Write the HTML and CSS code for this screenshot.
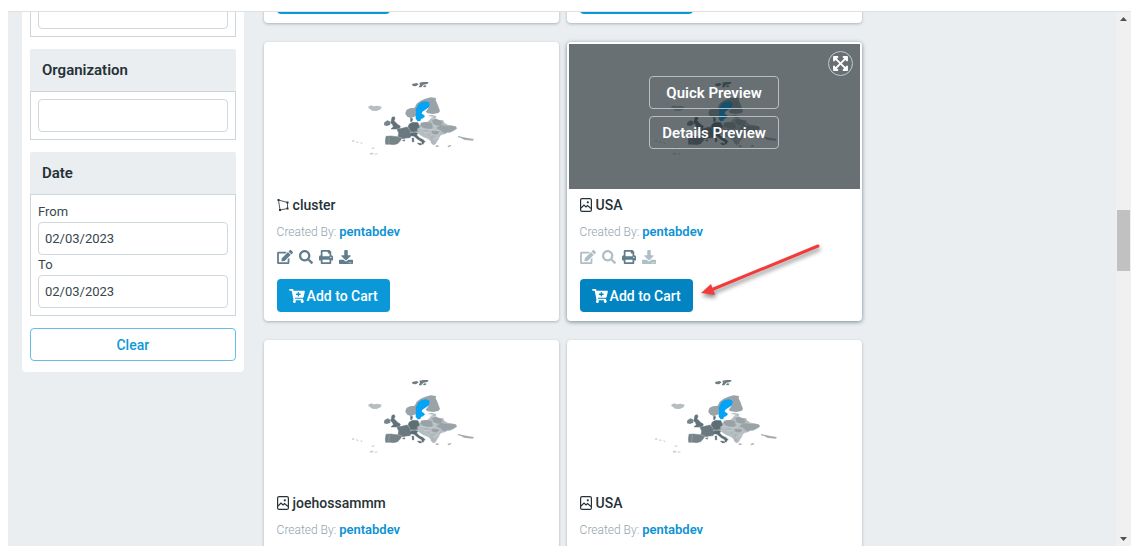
FILE: index.html
```html
<!DOCTYPE html>
<html lang="en">
<head>
    <meta charset="UTF-8">
    <meta name="viewport" content="width=device-width, initial-scale=1.0">
    <title>Marketplace</title>
    <link rel="stylesheet" href="styles.css">
</head>
<body>
    <svg class="sprite" aria-hidden="true">
        <symbol id="icon-edit" viewBox="0 0 576 512">
            <path d="M402.6 83.2l90.2 90.2c3.8 3.8 3.8 10 0 13.8L274.4 405.6l-92.8 10.3c-12.4 1.4-22.9-9.1-21.5-21.5l10.3-92.8L388.8 83.2c3.8-3.8 10-3.8 13.8 0zm162-22.9l-48.8-48.8c-15.2-15.2-39.9-15.2-55.2 0l-35.4 35.4c-3.8 3.8-3.8 10 0 13.8l90.2 90.2c3.8 3.8 10 3.8 13.8 0l35.4-35.4c15.2-15.3 15.2-40 0-55.2zM384 346.2V448H64V128h229.8c3.2 0 6.2-1.3 8.5-3.5l40-40c7.6-7.6 2.2-20.5-8.5-20.5H48C21.5 64 0 85.5 0 112v352c0 26.5 21.5 48 48 48h352c26.5 0 48-21.5 48-48V306.2c0-10.7-12.9-16-20.5-8.5l-40 40c-2.2 2.3-3.5 5.3-3.5 8.5z"/>
        </symbol>
        <symbol id="icon-search" viewBox="0 0 512 512">
            <path d="M505 442.7L405.3 343c-4.5-4.5-10.6-7-17-7H372c27.6-35.3 44-79.7 44-128C416 93.1 322.9 0 208 0S0 93.1 0 208s93.1 208 208 208c48.3 0 92.7-16.4 128-44v16.3c0 6.4 2.5 12.5 7 17l99.7 99.7c9.4 9.4 24.6 9.4 33.9 0l28.3-28.3c9.4-9.4 9.4-24.6.1-34zM208 336c-70.7 0-128-57.2-128-128 0-70.7 57.2-128 128-128 70.7 0 128 57.2 128 128 0 70.7-57.2 128-128 128z"/>
        </symbol>
        <symbol id="icon-print" viewBox="0 0 512 512">
            <path d="M448 192V77.25c0-8.49-3.37-16.62-9.37-22.63L393.37 9.37c-6-6-14.14-9.37-22.63-9.37H96C78.33 0 64 14.33 64 32v160c-35.35 0-64 28.65-64 64v112c0 8.84 7.16 16 16 16h48v96c0 17.67 14.33 32 32 32h320c17.67 0 32-14.33 32-32v-96h48c8.84 0 16-7.16 16-16V256c0-35.35-28.65-64-64-64zm-64 256H128v-96h256v96zm0-224H128V64h192v48c0 8.84 7.16 16 16 16h48v96zm48 72c-13.25 0-24-10.75-24-24 0-13.26 10.75-24 24-24s24 10.74 24 24c0 13.25-10.75 24-24 24z"/>
        </symbol>
        <symbol id="icon-download" viewBox="0 0 512 512">
            <path d="M216 0h80c13.3 0 24 10.7 24 24v168h87.7c17.8 0 26.7 21.5 14.1 34.1L269.7 378.3c-7.5 7.5-19.8 7.5-27.3 0L90.1 226.1c-12.6-12.6-3.7-34.1 14.1-34.1H192V24c0-13.3 10.7-24 24-24zm296 376v112c0 13.3-10.7 24-24 24H24c-13.3 0-24-10.7-24-24V376c0-13.3 10.7-24 24-24h146.7l49 49c20.1 20.1 52.5 20.1 72.6 0l49-49H488c13.3 0 24 10.7 24 24zm-124 88c0-11-9-20-20-20s-20 9-20 20 9 20 20 20 20-9 20-20zm64 0c0-11-9-20-20-20s-20 9-20 20 9 20 20 20 20-9 20-20z"/>
        </symbol>
        <symbol id="icon-cart" viewBox="0 0 576 512">
            <path d="M504.717 320H211.572l6.545 32h268.418c15.401 0 26.816 14.301 23.403 29.319l-5.517 24.276C523.112 414.668 536 433.828 536 456c0 31.202-25.519 56.444-56.824 55.994-29.823-.429-54.35-24.631-55.155-54.447-.44-16.287 6.085-31.049 16.803-41.548H231.176C241.553 426.165 248 440.326 248 456c0 31.813-26.528 57.431-58.67 55.938-28.54-1.325-51.751-24.385-53.251-52.917-1.158-22.034 10.436-41.455 28.051-51.586L93.883 64H24C10.745 64 0 53.255 0 40V24C0 10.745 10.745 0 24 0h102.529c11.401 0 21.228 8.021 23.513 19.19L159.208 64H551.99c15.401 0 26.816 14.301 23.403 29.319l-47.273 208C525.637 312.246 515.923 320 504.717 320zM408 168h-48v-40c0-8.837-7.163-16-16-16h-16c-8.837 0-16 7.163-16 16v40h-48c-8.837 0-16 7.163-16 16v16c0 8.837 7.163 16 16 16h48v40c0 8.837 7.163 16 16 16h16c8.837 0 16-7.163 16-16v-40h48c8.837 0 16-7.163 16-16v-16c0-8.837-7.163-16-16-16z"/>
        </symbol>
        <symbol id="icon-expand" viewBox="0 0 448 512">
            <path d="M448 344v112a23.94 23.94 0 0 1-24 24H312c-21.39 0-32.09-25.9-17-41l36.2-36.2L224 295.6 116.77 402.9 153 439c15.09 15.1 4.39 41-17 41H24a23.94 23.94 0 0 1-24-24V344c0-21.4 25.89-32.1 41-17l36.19 36.2L184.46 256 77.18 148.7 41 185c-15.1 15.1-41 4.4-41-17V56a23.94 23.94 0 0 1 24-24h112c21.39 0 32.09 25.9 17 41l-36.2 36.2L224 216.4l107.23-107.3L295 73c-15.09-15.1-4.39-41 17-41h112a23.94 23.94 0 0 1 24 24v112c0 21.4-25.89 32.1-41 17l-36.19-36.2L263.54 256l107.28 107.3L407 327.1c15.1-15.2 41-4.5 41 16.9z"/>
        </symbol>
        <symbol id="icon-image" viewBox="0 0 12 14">
            <rect x=".6" y=".6" width="10.8" height="12.8" rx="1.5" fill="none" stroke="currentColor" stroke-width="1.2"/>
            <path d="M1 10l3-3 2 2 1.500-1.500L11 10.500" fill="none" stroke="currentColor" stroke-width="1.200"/>
            <circle cx="7.800" cy="4.300" r="1.100"/>
        </symbol>
        <symbol id="icon-polygon" viewBox="0 0 12 14">
            <path d="M1.500 2L10.500 4.500V10.500L3 12z" fill="none" stroke="currentColor" stroke-width=".8"/>
            <path d="M.5 1h2v2h-2zM9.500 3.500h2v2h-2zM9.500 9.500h2v2h-2zM2 11h2v2H2z"/>
        </symbol>
        <symbol id="map" viewBox="-12 -6 450 285">
            <!-- islands -->
            <path fill="#6f7d83" d="M216 42l14-3 6 4-8 6-10-1zM238 38l12-2 16 0-4 6-12 2-6 8-8 0 4-8zM252 46l8 1-4 5-7-1z"/>
            <path fill="#b7bec2" d="M85 110l8-4 8 3 12-2 12 3-3 8-12 5-14-1-6-5-5-3z"/>
            <path fill="#c9ced1" d="M35 212l6-2 3 4-6 2zM48 214l6 1 2 4-6-1zM60 217l8 2-3 4zM94 234l8-2 2 3-8 2zM89 249l10-1 2 5-10 1zM104 251l8-1 1 3-8 1z"/>
            <path fill="#a4adb2" d="M354 198l14 3 14 3 20 3-4 5-14-1-12-2-8-5-10-2zM287 226l10 1-2 4-8-1zM322 228l10-3 2 3-8 4z"/>
            <!-- north -->
            <path fill="#9aa3a8" d="M197 126l3-7 10-4 14-2 6-12 12-9 14-6 16-4 16 2-1 7 5 10 5 14 3 8-5 6-16 3-16-2-6-5 8-10-2-10-10-5-8 2-8 9-6 12-3 14-6 4-10 3-10-4-6-8z"/>
            <path fill="#03a3f5" d="M236 102l9-6 12-2 10 3 2 7-4 9-10 7-8 5-2 6 6 3 4 5-6 6-6 2-2 6-8 1-6-8 0-9 1-9-1-9 5-10z"/>
            <path fill="#b5bdc1" d="M262 138l12-4 15 4-2 7 10 5 12 0 4 8 10 6 12 2 14 4 2 6-9 6-12 6-9 1-7 4-8 1-6 4-3 8-5 7-4 8-7 5-6-5-2-7-10-8-12-4-12-8-8-8 2-22 12-1 4-5 12-2 8-6 4-7 8-3z"/>
            <!-- east -->
            <path fill="#98a2a7" d="M242 158l14-2 17 2 6 8-3 10-14 0-12-3-8-6zM276 151l10-4 14 4 8 7-5 8-12 1-10-5zM294 167l14-1 14 2 24 1 4 6-9 6-10 5-8-1-8 5-8-3-6-8-10-1zM274 183l14-2 10 6-6 7-13 0z"/>
            <path fill="#aeb7bb" d="M249 178l10-1 10 4-4 6-10 0zM263 192l12 2 8 6-6 6-12-4zM272 206l10 3 3 8-5 7-8-7z"/>
            <path fill="none" stroke="#e4e8ea" stroke-width="1" d="M238 174l13 3 14 2 10-1 11 4 10-2M275 166l14 2 10 0M252 188l14 0 8-6M264 202l12-9 16 2 8-6M280 210l8-8 10 1M262 140l14 6 13-1M284 170l0 9"/>
            <!-- west -->
            <path fill="#62727a" stroke="#62727a" stroke-width="1.500" d="M156 142l7-2 2 6-3 6 6 6 6 6 7 4-2 7-11 2-15 0 7-7-3-7-5-4 2-8z"/>
            <path fill="#76858c" d="M133 157l10-6 8 4 0 9-10 4-9-2z"/>
            <path fill="#5e6e75" stroke="#5e6e75" stroke-width="1.500" d="M208 162l10-5 16 1 4 14-7 4 2 9-12 3-12-3-1-8-4-6zM212 144l6 2-2 8-4 1z"/>
            <path fill="#6a7980" stroke="#6a7980" stroke-width="1.500" d="M171 178l14-3 16-4 9 8 0 8 4 9-4 7-12 1-8 2-16-5 2-12z"/>
            <path fill="#76848a" stroke="#76848a" stroke-width="1.500" d="M138 199l14-1 20 2 14 4-5 8-8 9-12 3-12-1-12 0-1-10z"/>
            <path fill="#5c6c74" stroke="#5c6c74" d="M212 188l14-1 8 3-4 5 8 8 12 6 6 7-4 1-2 6-5-2 1-5-13-8-11-9-10-2zM216 204l5 0 1 11-5 1zM232 219l10 1 4 4-8 1zM187 211l8-2-2 5z"/>
            <path fill="none" stroke="#c3cacd" stroke-width="1" d="M205 172l6 12 10 2 14-4M173 200l14 4M148 201l-2 20M212 188l10 0 12-4"/>
        </symbol>
    </svg>

    <div class="window">
        <main class="page">
            <aside class="filters">
                <section class="filter-group">
                    <div class="filter-body">
                        <input type="text" aria-label="Keyword">
                    </div>
                </section>
                <section class="filter-group">
                    <h2>Organization</h2>
                    <div class="filter-body">
                        <input type="text" aria-label="Organization">
                    </div>
                </section>
                <section class="filter-group">
                    <h2>Date</h2>
                    <div class="filter-body">
                        <label for="dateFrom">From</label>
                        <input type="text" id="dateFrom" value="02/03/2023">
                        <label for="dateTo">To</label>
                        <input type="text" id="dateTo" value="02/03/2023">
                    </div>
                </section>
                <button type="button" class="clear-btn">Clear</button>
            </aside>

            <div class="cards">
                <article class="card">
                    <div class="card-body">
                        <button type="button" class="cart-btn"><svg class="icon-wide"><use href="#icon-cart"/></svg>Add to Cart</button>
                    </div>
                </article>
                <article class="card">
                    <div class="card-body">
                        <button type="button" class="cart-btn"><svg class="icon-wide"><use href="#icon-cart"/></svg>Add to Cart</button>
                    </div>
                </article>

                <article class="card">
                    <div class="thumb"><svg class="map"><use href="#map"/></svg></div>
                    <div class="card-body">
                        <h3><svg class="type-icon"><use href="#icon-polygon"/></svg>cluster</h3>
                        <p class="author">Created By: <a href="#">pentabdev</a></p>
                        <div class="tools">
                            <button type="button" aria-label="Edit"><svg class="icon-wide"><use href="#icon-edit"/></svg></button>
                            <button type="button" aria-label="Search"><svg class="icon"><use href="#icon-search"/></svg></button>
                            <button type="button" aria-label="Print"><svg class="icon"><use href="#icon-print"/></svg></button>
                            <button type="button" aria-label="Download"><svg class="icon"><use href="#icon-download"/></svg></button>
                        </div>
                        <button type="button" class="cart-btn"><svg class="icon-wide"><use href="#icon-cart"/></svg>Add to Cart</button>
                    </div>
                </article>

                <article class="card active">
                    <div class="thumb">
                        <svg class="map"><use href="#map"/></svg>
                        <div class="overlay">
                            <button type="button" class="preview-btn">Quick Preview</button>
                            <button type="button" class="preview-btn">Details Preview</button>
                            <button type="button" class="expand-btn" aria-label="Expand"><svg class="icon"><use href="#icon-expand"/></svg></button>
                        </div>
                    </div>
                    <div class="card-body">
                        <h3><svg class="type-icon"><use href="#icon-image"/></svg>USA</h3>
                        <p class="author">Created By: <a href="#">pentabdev</a></p>
                        <div class="tools">
                            <button type="button" aria-label="Edit" disabled><svg class="icon-wide"><use href="#icon-edit"/></svg></button>
                            <button type="button" aria-label="Search" disabled><svg class="icon"><use href="#icon-search"/></svg></button>
                            <button type="button" aria-label="Print"><svg class="icon"><use href="#icon-print"/></svg></button>
                            <button type="button" aria-label="Download" disabled><svg class="icon"><use href="#icon-download"/></svg></button>
                        </div>
                        <button type="button" class="cart-btn"><svg class="icon-wide"><use href="#icon-cart"/></svg>Add to Cart</button>
                    </div>
                    <svg class="arrow" viewBox="0 0 130 64" aria-hidden="true">
                        <path d="M121 8L14 52" stroke="#f23c3c" stroke-width="3" stroke-linecap="round"/>
                        <path d="M4 55l10-9 4 11z" fill="#f23c3c"/>
                    </svg>
                </article>

                <article class="card">
                    <div class="thumb"><svg class="map"><use href="#map"/></svg></div>
                    <div class="card-body">
                        <h3><svg class="type-icon"><use href="#icon-image"/></svg>joehossammm</h3>
                        <p class="author">Created By: <a href="#">pentabdev</a></p>
                    </div>
                </article>
                <article class="card">
                    <div class="thumb"><svg class="map"><use href="#map"/></svg></div>
                    <div class="card-body">
                        <h3><svg class="type-icon"><use href="#icon-image"/></svg>USA</h3>
                        <p class="author">Created By: <a href="#">pentabdev</a></p>
                    </div>
                </article>
            </div>
        </main>

        <div class="scrollbar" aria-hidden="true">
            <svg viewBox="0 0 7 4"><path d="M3.500 0L7 4H0z"/></svg>
            <div class="track"><div class="thumb-bar"></div></div>
            <svg viewBox="0 0 7 4"><path d="M0 0h7L3.500 4z"/></svg>
        </div>
    </div>
</body>
</html>
```
FILE: styles.css
```css
* {
    box-sizing: border-box;
}
body {
    margin: 0;
    padding: 11px 13px 2px 8px;
    height: 100vh;
    background-color: #fff;
    color: #263238;
    font-family: Roboto, sans-serif;
    font-size: 14px;
}
h2, h3, p {
    margin: 0;
}
button {
    font-family: inherit;
    cursor: pointer;
}
svg {
    display: block;
    fill: currentColor;
}
.sprite {
    position: absolute;
    width: 0;
    height: 0;
}
.window {
    display: flex;
    height: 100%;
    border-top: 1px solid #dfe1e3;
    overflow: hidden;
}
.page {
    flex: 1;
    display: flex;
    align-items: flex-start;
    gap: 20px;
    background-color: #eaeef1;
}

/* filters */
.filters {
    flex: 0 0 20%;
    margin-top: -24px;
    margin-left: 14px;
    padding: 0 8px 11px;
    background-color: #fff;
    border-radius: 4px;
}
.filter-group {
    margin-bottom: 12px;
}
.filter-group h2 {
    padding: 0 12px;
    background-color: #eaeef1;
    border-radius: 2px 2px 0 0;
    font-size: 15px;
    font-weight: 600;
    line-height: 42px;
}
.filter-body {
    padding: 7px;
    border: 1px solid #cbd5da;
}
.filter-body label {
    display: block;
    line-height: 20px;
    color: #37474f;
    font-size: 13px;
}
.filter-body input {
    display: block;
    width: 100%;
    height: 33px;
    padding: 0 6px;
    border: 1px solid #cfd8dc;
    border-radius: 4px;
    background-color: #fff;
    color: #37474f;
    font-family: inherit;
    font-size: 13px;
}
.clear-btn {
    display: block;
    width: 100%;
    height: 33px;
    border: 1px solid #63bde6;
    border-radius: 4px;
    background-color: #fff;
    color: #0d99d9;
    font-size: 14px;
    font-weight: 500;
}

/* cards */
.cards {
    flex: 1;
    display: grid;
    grid-template-columns: repeat(2, minmax(0, 295px));
    gap: 19px 8px;
    margin-top: -38px;
}
.card {
    position: relative;
    background-color: #fff;
    border-radius: 4px;
    box-shadow: 0 1px 3px rgba(69, 90, 100, 0.4);
}
.card.active {
    box-shadow: 0 1px 4px rgba(69, 90, 100, 0.7);
}
.thumb {
    position: relative;
    display: flex;
    justify-content: center;
    align-items: center;
    height: 147px;
}
.map {
    width: 150px;
    height: 95px;
}
.overlay {
    position: absolute;
    inset: 2px 2px 0;
    display: flex;
    flex-direction: column;
    justify-content: center;
    align-items: center;
    gap: 7px;
    padding-bottom: 8px;
    background-color: rgba(30, 42, 46, 0.67);
}
.preview-btn {
    width: 130px;
    height: 33px;
    padding: 0;
    border: 1px solid #b9bec0;
    border-radius: 4px;
    background: none;
    color: #fff;
    font-size: 15px;
    font-weight: 600;
}
.expand-btn {
    position: absolute;
    top: 7px;
    right: 7px;
    display: flex;
    justify-content: center;
    align-items: center;
    width: 25px;
    height: 25px;
    padding: 0;
    border: 1px solid #c5cacc;
    border-radius: 50%;
    background: none;
    color: #fff;
}
.expand-btn .icon {
    width: 15px;
    height: 17px;
    flex: none;
}
.card-body {
    padding: 7px 13px 9px;
}
.card h3 {
    display: flex;
    align-items: center;
    gap: 4px;
    font-size: 14px;
    font-weight: 500;
    line-height: 18px;
}
.type-icon {
    width: 12px;
    height: 14px;
}
.author {
    margin-top: 9px;
    color: #90a4ae;
    font-size: 12px;
    font-weight: 300;
    line-height: 18px;
}
.author a {
    color: #0d92d4;
    font-size: 13px;
    font-weight: 600;
    text-decoration: none;
}
.tools {
    display: flex;
    gap: 6px;
    margin: 9px 0 15px;
}
.tools button {
    padding: 0;
    border: 0;
    background: none;
    color: #607d8b;
}
.tools button:disabled {
    color: #b0bec5;
}
.icon {
    width: 14px;
    height: 14px;
}
.icon-wide {
    width: 16px;
    height: 14px;
}
.cart-btn {
    display: flex;
    align-items: center;
    gap: 2px;
    height: 33px;
    padding: 0 12px;
    border: 0;
    border-radius: 4px;
    background-color: #0a98d8;
    color: #fff;
    font-size: 14px;
    font-weight: 500;
}
.active .cart-btn {
    background-color: #0284c3;
}
.arrow {
    position: absolute;
    top: 196px;
    left: 130px;
    width: 130px;
    height: 64px;
    filter: drop-shadow(1px 3px 2px rgba(0, 0, 0, 0.45));
}

/* scrollbar */
.scrollbar {
    display: flex;
    flex-direction: column;
    align-items: center;
    width: 15px;
    padding: 5px 1px;
    background-color: #f0f0f0;
    color: #505050;
}
.scrollbar svg {
    width: 7px;
    height: 4px;
}
.track {
    flex: 1;
    width: 100%;
    padding-top: 189px;
}
.thumb-bar {
    height: 61px;
    background-color: #c1c1c1;
}
```
